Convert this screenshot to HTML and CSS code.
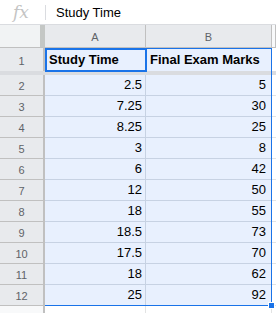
FILE: index.html
```html
<!DOCTYPE html>
<html>
<head>
<meta charset="utf-8">
<link rel="stylesheet" href="styles.css">
</head>
<body>
<div class="fbar">
  <div class="fx">fx</div>
  <div class="ftext">Study Time</div>
</div>
<div class="sheet">
  <div class="row hdr">
    <div class="rh corner"></div>
    <div class="c a ch">A</div>
    <div class="c b ch">B</div>
    <div class="c rest ch"></div>
  </div>
  <div class="row r1">
    <div class="rh">1</div>
    <div class="c a t">Study Time</div>
    <div class="c b t">Final Exam Marks</div>
    <div class="c rest"></div>
  </div>
  <div class="freeze"></div>
  <div class="row"><div class="rh">2</div><div class="c a n">2.5</div><div class="c b n">5</div><div class="c rest"></div></div>
  <div class="row"><div class="rh">3</div><div class="c a n">7.25</div><div class="c b n">30</div><div class="c rest"></div></div>
  <div class="row"><div class="rh">4</div><div class="c a n">8.25</div><div class="c b n">25</div><div class="c rest"></div></div>
  <div class="row"><div class="rh">5</div><div class="c a n">3</div><div class="c b n">8</div><div class="c rest"></div></div>
  <div class="row"><div class="rh">6</div><div class="c a n">6</div><div class="c b n">42</div><div class="c rest"></div></div>
  <div class="row"><div class="rh">7</div><div class="c a n">12</div><div class="c b n">50</div><div class="c rest"></div></div>
  <div class="row"><div class="rh">8</div><div class="c a n">18</div><div class="c b n">55</div><div class="c rest"></div></div>
  <div class="row"><div class="rh">9</div><div class="c a n">18.5</div><div class="c b n">73</div><div class="c rest"></div></div>
  <div class="row"><div class="rh">10</div><div class="c a n">17.5</div><div class="c b n">70</div><div class="c rest"></div></div>
  <div class="row"><div class="rh">11</div><div class="c a n">18</div><div class="c b n">62</div><div class="c rest"></div></div>
  <div class="row"><div class="rh">12</div><div class="c a n">25</div><div class="c b n">92</div><div class="c rest"></div></div>
  <div class="row empty"><div class="rh"></div><div class="c a"></div><div class="c b"></div><div class="c rest"></div></div>
  <div class="range"></div>
  <div class="active"></div>
  <div class="handle"></div>
</div>
</body>
</html>
```
FILE: styles.css
```css
* { box-sizing: border-box; }
html, body { margin: 0; padding: 0; background: #fff; overflow: hidden; }
body { width: 276px; height: 313px; font-family: "Liberation Sans", Arial, sans-serif; }

.fbar {
  height: 25px;
  display: flex;
  align-items: center;
  border-bottom: 1px solid #dadce0;
}
.fx {
  width: 46px;
  height: 15px;
  display: flex;
  align-items: center;
  justify-content: center;
  padding-right: 3px;
  border-right: 1px solid #dadce0;
  font-family: "DejaVu Serif", "Liberation Serif", serif;
  font-style: italic;
  font-size: 17px;
  color: #c4c4c4;
  line-height: 1;
}
.ftext {
  padding-left: 10px;
  font-size: 13px;
  color: #000;
}

.sheet { position: relative; }
.row { display: flex; height: 21px; }
.rh {
  width: 45px;
  flex: none;
  background: #e8eaed;
  border-right: 2px solid #c0c0c0;
  border-bottom: 1px solid #c0c0c0;
  display: flex;
  align-items: center;
  justify-content: center;
  font-size: 11px;
  color: #5f6368;
  padding-top: 1px;
}
.c {
  flex: none;
  height: 100%;
  background: #e8f0fe;
  border-right: 1px solid #c7d2e3;
  border-bottom: 1px solid #c7d2e3;
  display: flex;
  align-items: flex-end;
  font-size: 13px;
  color: #000;
  padding: 0 3px 3px;
  white-space: nowrap;
}
.a { width: 101px; }
.b { width: 126px; }
.rest { flex: 1; background: #fff; border-right: none; border-bottom: 1px solid #e2e3e3; }
.n { justify-content: flex-end; }
.b.n { padding-right: 5px; }
.t { font-weight: bold; padding-left: 4px; padding-bottom: 4px; }

.hdr { height: 23px; }
.hdr .corner { background: #f1f3f4; border-right: 5px solid #c4c7c5; border-bottom: 1px solid #c0c0c0; }
.ch {
  background: #e8eaed;
  border-right: 1px solid #c0c0c0;
  border-bottom: 1px solid #c0c0c0;
  justify-content: center;
  align-items: center;
  font-size: 11px;
  color: #5f6368;
  padding: 2px 0 0;
}
.hdr .rest { background: #f8f9fa; border-bottom: 1px solid #c0c0c0; }

.r1 { height: 23px; }
.r1 .c { border-bottom: none; }
.r1 .rh { border-bottom: none; padding-top: 2px; }

.freeze { height: 4px; background: #dadce0; }

.empty .rh { background: #f8f9fa; }
.empty .c { background: #fff; border-color: #e2e3e3; }

.range {
  position: absolute;
  left: 45px;
  top: 23px;
  width: 227px;
  height: 258px;
  border: 1px solid #1a73e8;
  border-left: none;
  pointer-events: none;
}
.active {
  position: absolute;
  left: 45px;
  top: 23px;
  width: 102px;
  height: 24px;
  border: 2px solid #1a73e8;
}
.handle {
  position: absolute;
  left: 268px;
  top: 277px;
  width: 7px;
  height: 7px;
  background: #1a73e8;
  border: 1px solid #fff;
}
```
